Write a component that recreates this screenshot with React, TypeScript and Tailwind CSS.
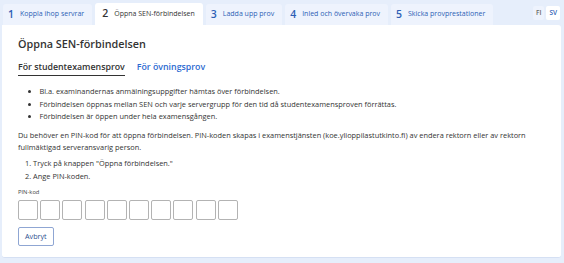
const STEPS = [
  { n: 1, label: 'Koppla ihop servrar' },
  { n: 2, label: 'Öppna SEN-förbindelsen' },
  { n: 3, label: 'Ladda upp prov' },
  { n: 4, label: 'Inled och övervaka prov' },
  { n: 5, label: 'Skicka provprestationer' },
]

const ACTIVE = 2

export default function App() {
  return (
    <div
      className="w-[564px] h-[263px] bg-[#e6eefb] text-[#333] overflow-hidden"
      style={{ fontFamily: '"Open Sans", "Noto Sans", sans-serif' }}
    >
      <div className="flex items-end pl-[3px] pr-[4px] pt-[3px]">
        {STEPS.map(step => (
          <div
            key={step.n}
            className={`flex shrink-0 items-center whitespace-nowrap gap-[6px] mr-[3px] rounded-t-[3px] ${
              step.n === ACTIVE
                ? 'bg-white h-[22px] pl-[7px] pr-[8px]'
                : 'bg-[#eef3fd] h-[21px] pl-[5px] pr-[8px]'
            }`}
          >
            <span
              className={`text-[10.5px] font-semibold ${
                step.n === ACTIVE ? 'text-[#333]' : 'text-[#2d5fb5]'
              }`}
            >
              {step.n}
            </span>
            <span
              className={`text-[7px] ${
                step.n === ACTIVE ? 'text-[#333]' : 'text-[#2d5fb5]'
              }`}
            >
              {step.label}
            </span>
          </div>
        ))}
        <div className="ml-auto flex gap-[2px] self-center mb-[2px]">
          <span className="px-[3px] py-[2px] text-[6.5px] font-semibold text-[#666] bg-[#eef3fd] rounded-[2px]">
            FI
          </span>
          <span className="px-[3px] py-[2px] text-[6.5px] font-semibold text-[#2d5fb5] bg-white rounded-[2px]">
            SV
          </span>
        </div>
      </div>

      <div className="mx-[2px] w-[559px] bg-white rounded-b-[3px] rounded-tr-[3px] border-b border-[#d5e0f3] px-[16px] pt-[11px] pb-[11px]">
        <h1 className="text-[10.8px] font-semibold text-[#333] leading-[16px]">
          Öppna SEN-förbindelsen
        </h1>

        <div className="flex gap-[12px] mt-[9px] text-[8.8px] font-semibold">
          <span className="border-b border-[#333] pb-[1px] text-[#333]">
            För studentexamensprov
          </span>
          <span className="text-[#2d6ad1]">För övningsprov</span>
        </div>

        <ul className="mt-[9px] ml-[10px] list-disc list-inside text-[7.4px] leading-[12.5px] text-[#333]">
          <li>Bl.a. examinandernas anmälningsuppgifter hämtas över förbindelsen.</li>
          <li>
            Förbindelsen öppnas mellan SEN och varje servergrupp för den tid då
            studentexamensproven förrättas.
          </li>
          <li>Förbindelsen är öppen under hela examensgången.</li>
        </ul>

        <p className="mt-[6px] text-[7.4px] leading-[12px]">
          Du behöver en PIN-kod för att öppna förbindelsen. PIN-koden skapas i
          examenstjänsten (koe.ylioppilastutkinto.fi) av endera rektorn eller av
          rektorn fullmäktigad serveransvarig person.
        </p>

        <ol className="mt-[4px] ml-[7px] list-decimal list-inside text-[7.4px] leading-[13px]">
          <li>Tryck på knappen "Öppna förbindelsen."</li>
          <li>Ange PIN-koden.</li>
        </ol>

        <div className="mt-[4px] text-[5.8px] leading-[10px] text-[#444]">PIN-kod</div>
        <div className="flex gap-[2.2px] mt-[3px]">
          {Array.from({ length: 10 }).map((_, i) => (
            <div
              key={i}
              className="w-[20px] h-[20px] border border-[#b3b3b3] rounded-[2px]"
            />
          ))}
        </div>

        <button className="mt-[7px] h-[19px] px-[6px] border border-[#8fa6d3] rounded-[2px] text-[7.2px] text-[#2d4f8f]">
          Avbryt
        </button>
      </div>
    </div>
  )
}
